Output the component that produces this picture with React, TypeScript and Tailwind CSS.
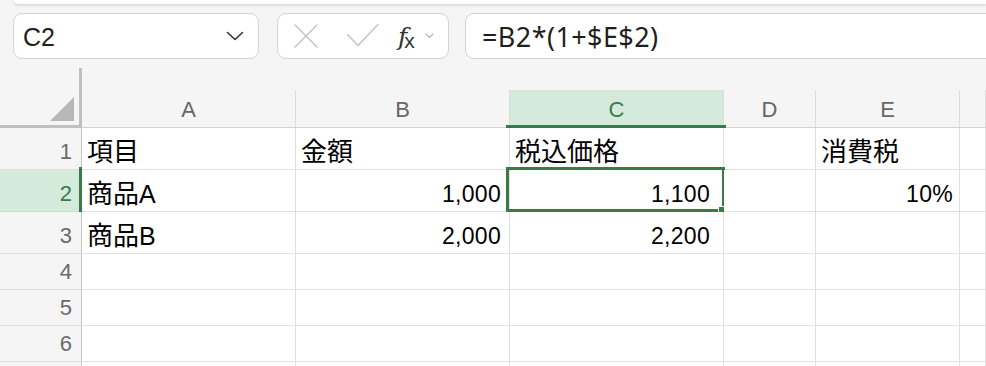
import React from "react";

const GREEN = "#3a7a4a";

const cellFont = { fontFamily: '"Liberation Sans", "Noto Sans CJK JP", sans-serif' };

type Cell = { cjk?: string; latin?: string; align?: "left" | "right"; pr?: string };

const colClasses = [
  "w-[214px]",
  "w-[214px]",
  "w-[214px]",
  "w-[92px]",
  "w-[144px]",
  "flex-1",
];

const rows: { h: string; cells: Cell[] }[] = [
  {
    h: "h-[42px]",
    cells: [{ cjk: "項目" }, { cjk: "金額" }, { cjk: "税込価格" }, {}, { cjk: "消費税" }, {}],
  },
  {
    h: "h-[42px]",
    cells: [
      { cjk: "商品", latin: "A" },
      { latin: "1,000", align: "right", pr: "pr-[8px]" },
      { latin: "1,100", align: "right", pr: "pr-[13px]" },
      {},
      { latin: "10%", align: "right", pr: "pr-[6px]" },
      {},
    ],
  },
  {
    h: "h-[42px]",
    cells: [
      { cjk: "商品", latin: "B" },
      { latin: "2,000", align: "right", pr: "pr-[8px]" },
      { latin: "2,200", align: "right", pr: "pr-[13px]" },
      {},
      {},
      {},
    ],
  },
  { h: "h-[36px]", cells: [{}, {}, {}, {}, {}, {}] },
  { h: "h-[36px]", cells: [{}, {}, {}, {}, {}, {}] },
  { h: "h-[36px]", cells: [{}, {}, {}, {}, {}, {}] },
  { h: "h-[36px]", cells: [{}, {}, {}, {}, {}, {}] },
];

function Toolbar() {
  return (
    <div className="flex items-start px-[13px] pt-[9px]">
      {/* name box */}
      <div className="w-[246px] h-[46px] shrink-0 bg-white border-[1.5px] border-[#d3d3d3] rounded-[9px] flex items-center pl-[9px] pr-[14px]">
        <span
          className="text-[25px] text-[#222] leading-[25px] pt-[3px] flex-1"
          style={{ fontFamily: '"Liberation Sans", sans-serif' }}
        >
          C2
        </span>
        <svg width="18" height="12" viewBox="0 0 18 12" fill="none">
          <path d="M1.5 2.5 L9 9.5 L16.5 2.5" stroke="#333" strokeWidth="1.6" strokeLinecap="round" strokeLinejoin="round" />
        </svg>
      </div>
      {/* function box */}
      <div className="ml-[18px] w-[172px] h-[46px] shrink-0 bg-white border-[1.5px] border-[#d3d3d3] rounded-[9px] flex items-center pl-[15px]">
        <svg width="26" height="26" viewBox="0 0 26 26" fill="none">
          <path d="M2 2 L24 24 M24 2 L2 24" stroke="#c4c4c4" strokeWidth="1.5" strokeLinecap="round" />
        </svg>
        <svg className="ml-[27px]" width="34" height="26" viewBox="0 0 34 26" fill="none">
          <path d="M1.5 11.5 L12 22.5 L32 1.5" stroke="#c4c4c4" strokeWidth="1.5" strokeLinecap="round" strokeLinejoin="round" />
        </svg>
        <span
          className="ml-[18px] text-[#333] italic leading-none text-[25px] flex items-end"
          style={{ fontFamily: '"DejaVu Serif", "Liberation Serif", serif' }}
        >
          <span className="tracking-[-3px]">f</span>
          <span className="text-[21px] not-italic relative top-[2px]" style={{ fontFamily: '"Liberation Sans", sans-serif' }}>x</span>
        </span>
        <svg className="ml-[10px]" width="9" height="6" viewBox="0 0 9 6" fill="none">
          <path d="M1 1 L4.5 4.5 L8 1" stroke="#b5b5b5" strokeWidth="1.1" strokeLinecap="round" strokeLinejoin="round" />
        </svg>
      </div>
      {/* formula box */}
      <div className="ml-[16px] flex-1 mr-[-40px] h-[46px] bg-white border-[1.5px] border-[#d3d3d3] rounded-[9px] flex items-center pl-[16px]">
        <span
          className="text-[27px] text-[#1f1f1f] leading-[27px] tracking-[0.4px]"
          style={{ fontFamily: '"Noto Sans", sans-serif' }}
        >
          =B2*(1+$E$2)
        </span>
      </div>
    </div>
  );
}

function HeaderRow() {
  const letters = ["A", "B", "C", "D", "E", ""];
  return (
    <div className="flex mt-[9px] h-[60px]">
      {/* corner */}
      <div className="relative w-[82px] shrink-0 h-[60px] bg-[#f5f5f5] border-r-[3px] border-b-[3px] border-[#c0c0c0]">
        <svg className="absolute right-[5px] bottom-[4px]" width="24" height="24" viewBox="0 0 24 24">
          <path d="M24 0 L24 24 L0 24 Z" fill="#b7b7b7" />
        </svg>
      </div>
      {letters.map((l, i) => (
        <div key={i} className={`${colClasses[i]} shrink-0 flex flex-col h-[60px] bg-[#f5f5f5] border-b border-[#d2d2d2]`}>
          <div className="h-[22px]" />
          <div
            className={`relative flex-1 flex items-end justify-center pb-[6px] text-[22px] leading-[22px] border-r border-[#dcdcdc] ${
              l === "C" ? "bg-[#d4eadb] text-[#3a7a4a]" : "text-[#666]"
            }`}
            style={{ fontFamily: '"Liberation Sans", sans-serif' }}
          >
            {l}
            {l === "C" && (
              <div className="absolute left-[-4px] right-[-3px] bottom-[-1px] h-[3px] bg-[#3a7a4a]" />
            )}
          </div>
        </div>
      ))}
    </div>
  );
}

export default function App() {
  return (
    <div className="w-[986px] h-[366px] overflow-hidden bg-[#f5f5f5] relative">
      <div className="ml-[14px] h-[4px] bg-white rounded-bl-[12px] shadow-[0_1px_3px_rgba(0,0,0,0.18)]" />
      <Toolbar />
      <HeaderRow />
      {rows.map((row, ri) => {
        const selectedRow = ri === 1;
        return (
          <div key={ri} className={`flex ${row.h}`}>
            <div
              className={`relative w-[82px] shrink-0 flex items-end justify-end pr-[9px] pb-[6px] text-[22px] leading-[22px] border-r border-b ${
                selectedRow ? "bg-[#d4eadb] text-[#3a7a4a] border-b-[#c9dfd0]" : "bg-[#f5f5f5] text-[#6a6a6a] border-b-[#dedede]"
              } border-r-[#c6c6c6]`}
              style={{ fontFamily: '"Liberation Sans", sans-serif' }}
            >
              {ri < 6 ? ri + 1 : ""}
              {selectedRow && (
                <div className="absolute right-[-1px] top-[-3px] bottom-[-2px] w-[3px] bg-[#3a7a4a]" />
              )}
            </div>
            {row.cells.map((c, ci) => {
              const selected = ri === 1 && ci === 2;
              return (
                <div
                  key={ci}
                  className={`relative ${colClasses[ci]} shrink-0 bg-white border-r border-b border-[#e0e0e0] flex items-end pb-[5px] text-[23px] leading-[23px] text-black tracking-[0.3px] ${
                    c.align === "right" ? "justify-end" : "justify-start pl-[5px]"
                  } ${c.pr ?? ""}`}
                  style={cellFont}
                >
                  {c.cjk && <span className="text-[26px] leading-[23px] tracking-normal">{c.cjk}</span>}
                  {c.cjk && c.latin ? (
                    <span className="text-[25px] leading-[23px]">{c.latin}</span>
                  ) : (
                    c.latin
                  )}
                  {selected && (
                    <>
                      <div
                        className="absolute left-[-4px] top-[-3px] right-[-2px] bottom-[-1px] border-[3px]"
                        style={{ borderColor: GREEN }}
                      />
                      <div
                        className="absolute left-[208px] top-[36px] w-[10px] h-[10px] border border-white"
                        style={{ backgroundColor: GREEN }}
                      />
                    </>
                  )}
                </div>
              );
            })}
          </div>
        );
      })}
    </div>
  );
}
